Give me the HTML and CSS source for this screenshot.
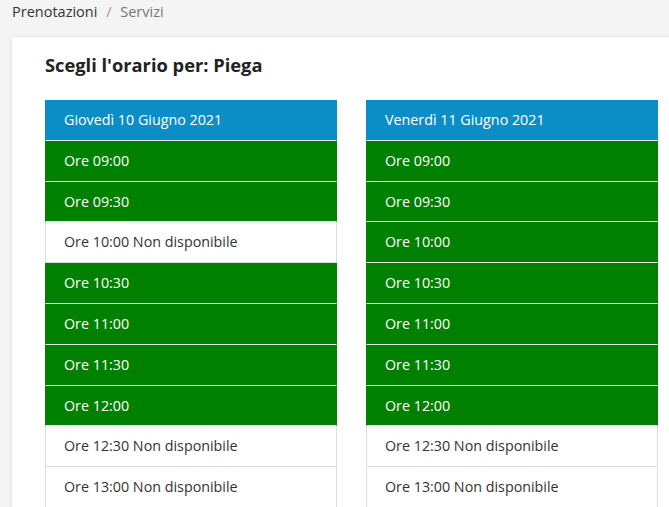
FILE: index.html
```html
<!DOCTYPE html>
<html lang="it">
<head>
  <meta charset="UTF-8">
  <meta name="viewport" content="width=device-width, initial-scale=1.0">
  <title>Prenotazioni - Servizi</title>
  <link rel="stylesheet" href="styles.css">
</head>
<body>
  <nav class="breadcrumb">
    <span class="crumb">Prenotazioni</span>
    <span class="sep">/</span>
    <span class="crumb active">Servizi</span>
  </nav>

  <div class="card">
    <h2 class="title">Scegli l'orario per: Piega</h2>

    <div class="days">
      <ul class="slots">
        <li class="day">Giovedì 10 Giugno 2021</li>
        <li class="slot free">Ore 09:00</li>
        <li class="slot free">Ore 09:30</li>
        <li class="slot">Ore 10:00 Non disponibile</li>
        <li class="slot free">Ore 10:30</li>
        <li class="slot free">Ore 11:00</li>
        <li class="slot free">Ore 11:30</li>
        <li class="slot free">Ore 12:00</li>
        <li class="slot">Ore 12:30 Non disponibile</li>
        <li class="slot">Ore 13:00 Non disponibile</li>
      </ul>

      <ul class="slots">
        <li class="day">Venerdì 11 Giugno 2021</li>
        <li class="slot free">Ore 09:00</li>
        <li class="slot free">Ore 09:30</li>
        <li class="slot free">Ore 10:00</li>
        <li class="slot free">Ore 10:30</li>
        <li class="slot free">Ore 11:00</li>
        <li class="slot free">Ore 11:30</li>
        <li class="slot free">Ore 12:00</li>
        <li class="slot">Ore 12:30 Non disponibile</li>
        <li class="slot">Ore 13:00 Non disponibile</li>
      </ul>
    </div>
  </div>
</body>
</html>
```

FILE: styles.css
```css
body {
  margin: 0;
  background: #f4f4f4;
  font-family: "Open Sans", Arial, sans-serif;
  font-size: 14.3px;
  color: #333;
  overflow: hidden;
}
.breadcrumb {
  padding: 2px 12px;
  height: 33px;
  line-height: 20px;
  font-size: 14.5px;
}
.sep {
  color: #999;
  margin: 0 5px;
}
.crumb.active {
  color: #777;
}
.card {
  margin-left: 12px;
  width: 720px;
  background: #fff;
  box-shadow: 0 0 3px rgba(0, 0, 0, 0.12);
  padding: 15px 33px 20px;
}
.title {
  margin: 0 0 23px;
  font-size: 18.3px;
  line-height: 25px;
  font-weight: 700;
  color: #222;
}
.days {
  display: flex;
  gap: 29px;
}
.slots {
  list-style: none;
  margin: 0;
  padding: 0;
  width: 292px;
}
.slots li {
  height: 39.8px;
  line-height: 39.8px;
  padding: 0 18px;
  border: 1px solid #dedede;
  border-top: none;
}
.slots .day {
  background: #0b8ec6;
  border-color: #0b8ec6;
  border-bottom-color: #e6e6e6;
  color: #fff;
}
.slots .slot.free {
  background: #008000;
  border-left-color: #008000;
  border-right-color: #008000;
  border-bottom-color: #e8f0e8;
  color: #fff;
}
```
